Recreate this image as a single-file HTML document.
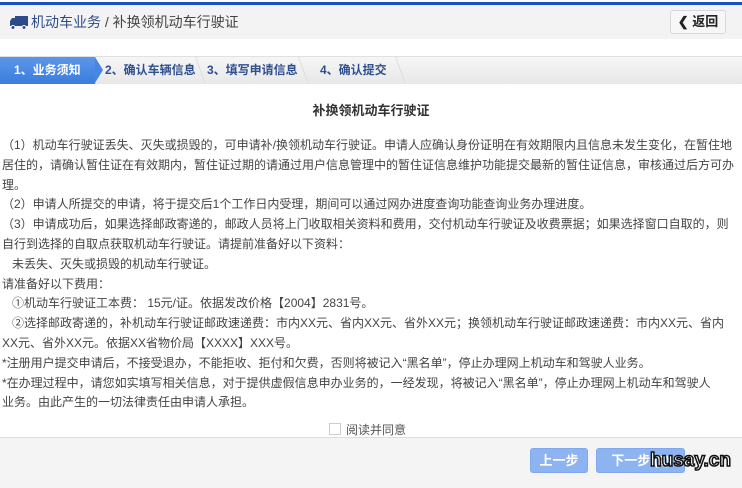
<!DOCTYPE html><html><head><meta charset="utf-8"><style>
body{margin:0;width:742px;height:487px;overflow:hidden;background:#fff;font-family:"Liberation Sans","Noto Sans CJK SC",sans-serif;color:#333;position:relative}
.top{position:absolute;left:0;top:2px;width:742px;height:3px;background:#1c4fc4}
.hd{position:absolute;left:0;top:5px;width:742px;height:34px;background:#f3f3f3;font-size:14px;line-height:34px}
.hd .t{position:absolute;left:31px;top:0;color:#2d4a8a}
.back{position:absolute;left:670px;top:5px;width:54px;height:22px;border:1px solid #d8d8d8;border-radius:3px;background:#f7f7f7;font-size:13px;line-height:22px;text-align:center;color:#222;font-weight:bold}
.steps{position:absolute;left:0;top:56px;width:742px;height:27px;background:linear-gradient(#f6f6f6,#e8e8e8);border-top:1px solid #e0e0e0;font-size:12px;font-weight:bold;color:#2f4f8f;line-height:27px}
.s1{position:absolute;left:0;top:0;width:95px;height:27px;background:linear-gradient(#5b96ea,#3b7ddd);color:#fff;padding-left:14px;box-sizing:border-box}
.s1:after{content:"";position:absolute;right:-8px;top:0;border-left:8px solid #4786e2;border-top:13.5px solid transparent;border-bottom:13.5px solid transparent}
.sep{position:absolute;top:0;width:1px;height:27px;background:#ddd;transform:skewX(20deg)}
.title{position:absolute;top:100px;left:0;width:742px;text-align:center;font-size:13px;font-weight:bold;color:#333}
.txt{position:absolute;left:2px;top:136px;font-size:12px;line-height:19.8px;white-space:nowrap;color:#444}
.foot{position:absolute;left:0;top:437px;width:742px;height:50px;background:#f4f4f4;border-top:1px solid #ddd}
.btn{position:absolute;top:10px;height:23px;background:#8db3f1;border:1px solid #7fa8ee;border-radius:3px;color:#fff;font-size:13px;font-weight:bold;line-height:23px;text-align:center}
.chk{position:absolute;left:329px;top:421px;font-size:12px;color:#555}
.chk i{display:inline-block;width:10px;height:10px;border:1px solid #ccc;vertical-align:-1px;margin-right:5px}
</style></head><body>
<div class="top"></div>
<div class="hd"><svg style="position:absolute;left:10px;top:11px" width="18" height="14" viewBox="0 0 18 14"><rect x="5" y="0" width="13" height="10" fill="#2d4a8a"/><path d="M0 5 L2 2 H5 V10 H0Z" fill="#2d4a8a"/><circle cx="3" cy="11.5" r="2" fill="#2d4a8a" stroke="#fff"/><circle cx="14" cy="11.5" r="2" fill="#2d4a8a" stroke="#fff"/></svg><span class="t">机动车业务 <span style="color:#444">/ 补换领机动车行驶证</span></span><div class="back">❮ 返回</div></div>
<div class="steps"><div class="s1">1、业务须知</div><span style="position:absolute;left:105px">2、确认车辆信息</span><span style="position:absolute;left:207px">3、填写申请信息</span><span style="position:absolute;left:320px">4、确认提交</span><div class="sep" style="left:200px"></div><div class="sep" style="left:303px"></div><div class="sep" style="left:400px"></div></div>
<div class="title">补换领机动车行驶证</div>
<div class="txt">（1）机动车行驶证丢失、灭失或损毁的，可申请补/换领机动车行驶证。申请人应确认身份证明在有效期限内且信息未发生变化，在暂住地<br>居住的，请确认暂住证在有效期内，暂住证过期的请通过用户信息管理中的暂住证信息维护功能提交最新的暂住证信息，审核通过后方可办<br>理。<br>（2）申请人所提交的申请，将于提交后1个工作日内受理，期间可以通过网办进度查询功能查询业务办理进度。<br>（3）申请成功后，如果选择邮政寄递的，邮政人员将上门收取相关资料和费用，交付机动车行驶证及收费票据；如果选择窗口自取的，则<br>自行到选择的自取点获取机动车行驶证。请提前准备好以下资料：<br>&nbsp;&nbsp;&nbsp;未丢失、灭失或损毁的机动车行驶证。<br>请准备好以下费用：<br>&nbsp;&nbsp;&nbsp;①机动车行驶证工本费： 15元/证。依据发改价格【2004】2831号。<br>&nbsp;&nbsp;&nbsp;②选择邮政寄递的，补机动车行驶证邮政速递费：市内XX元、省内XX元、省外XX元；换领机动车行驶证邮政速递费：市内XX元、省内<br>XX元、省外XX元。依据XX省物价局【XXXX】XXX号。<br>*注册用户提交申请后，不接受退办，不能拒收、拒付和欠费，否则将被记入“黑名单”，停止办理网上机动车和驾驶人业务。<br>*在办理过程中，请您如实填写相关信息，对于提供虚假信息申办业务的，一经发现，将被记入“黑名单”，停止办理网上机动车和驾驶人<br>业务。由此产生的一切法律责任由申请人承担。</div>
<div class="chk"><i></i>阅读并同意</div>
<div class="foot"><div class="btn" style="left:530px;width:56px">上一步</div><div class="btn" style="left:596px;width:87px">下一步 (2)</div>
<div style="position:absolute;left:650px;top:12px;font-size:19px;font-weight:bold;color:#fff;-webkit-text-stroke:1.5px #111;font-family:'Liberation Sans',sans-serif">husay.cn</div></div>
</body></html>
